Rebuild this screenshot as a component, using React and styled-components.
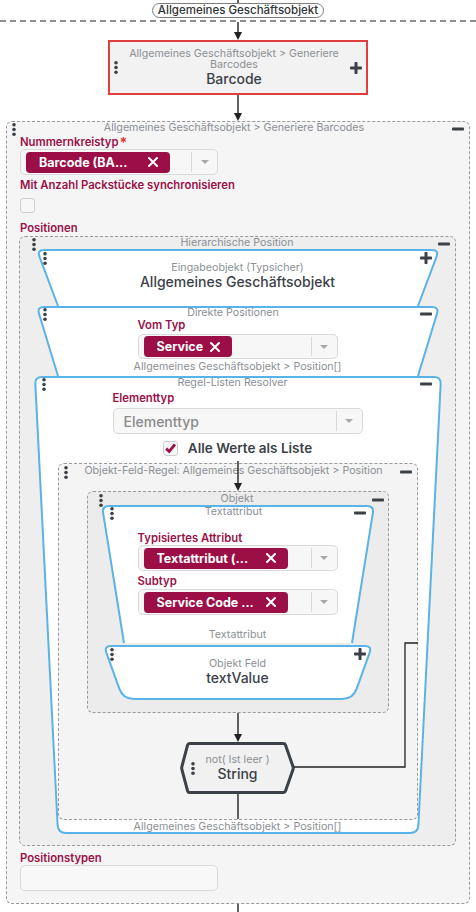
import styled, { createGlobalStyle } from "styled-components";

const GlobalStyle = createGlobalStyle`
  body {
    margin: 0;
    background: #fff;
    font-family: Inter, "Open Sans", sans-serif;
    color: #3b4147;
  }
`;

const INK = "#3b4147";
const CRIMSON = "#9a1149";
const BLUE = "#5ab3e6";

/* ---------- geometry helpers for the node shapes ---------- */
const toward = (p, q, r) => {
  const dx = q[0] - p[0];
  const dy = q[1] - p[1];
  const len = Math.hypot(dx, dy) || 1;
  return [p[0] + (dx / len) * r, p[1] + (dy / len) * r];
};
const fmt = (p) => `${p[0].toFixed(2)},${p[1].toFixed(2)}`;

function polyPath(pts, radii, closed = true) {
  const n = pts.length;
  let d = "";
  for (let i = 0; i < n; i++) {
    const p = pts[i];
    if (!closed && (i === 0 || i === n - 1)) {
      d += i === 0 ? `M${fmt(p)}` : ` L${fmt(p)}`;
      continue;
    }
    const prev = pts[(i - 1 + n) % n];
    const next = pts[(i + 1) % n];
    const a = toward(p, prev, radii[i]);
    const b = toward(p, next, radii[i]);
    d += (d ? ` L${fmt(a)}` : `M${fmt(a)}`) + ` Q${fmt(p)} ${fmt(b)}`;
  }
  return closed ? d + " Z" : d;
}

/* ---------- layout ---------- */
const Page = styled.div`
  width: 476px;
  display: flex;
  flex-direction: column;
  align-items: center;
`;

const EntryPill = styled.div`
  height: 15px;
  box-sizing: border-box;
  padding: 0 5px;
  border: 1px solid #7c7c7c;
  border-radius: 8px;
  font-size: 11.5px;
  font-weight: 500;
  line-height: 13px;
  color: #2f3338;
  white-space: nowrap;
`;

const DashedRule = styled.div`
  align-self: stretch;
  height: 2px;
  margin-top: 2px;
  background-image: linear-gradient(to right, #8e8e8e 60%, transparent 60%);
  background-size: 10px 2px;
`;

const WireSvg = styled.svg`
  display: block;
  flex-shrink: 0;
  overflow: visible;
`;

function Wire({ h, head = true }) {
  return (
    <WireSvg width="10" height={h} viewBox={`0 0 10 ${h}`}>
      <line x1="5" y1="0" x2="5" y2={head ? h - 5 : h} stroke="#222" strokeWidth="1.4" />
      {head && <polygon points={`1,${h - 8} 9,${h - 8} 5,${h}`} fill="#222" />}
    </WireSvg>
  );
}

function Handle() {
  return (
    <WireSvg width="4" height="13" viewBox="0 0 4 13">
      <circle cx="2" cy="1.8" r="1.8" fill={INK} />
      <circle cx="2" cy="6.5" r="1.8" fill={INK} />
      <circle cx="2" cy="11.2" r="1.8" fill={INK} />
    </WireSvg>
  );
}

function PlusIcon() {
  return (
    <WireSvg width="12" height="12" viewBox="0 0 12 12">
      <rect x="0" y="4.5" width="12" height="3" rx="0.8" fill={INK} />
      <rect x="4.5" y="0" width="3" height="12" rx="0.8" fill={INK} />
    </WireSvg>
  );
}

function MinusIcon() {
  return (
    <WireSvg width="12" height="12" viewBox="0 0 12 12">
      <rect x="0" y="4.5" width="12" height="3" rx="0.8" fill={INK} />
    </WireSvg>
  );
}

const ActionCard = styled.div`
  width: 260px;
  height: 55px;
  box-sizing: border-box;
  border: 2px solid #e0403b;
  background: #f2f2f2;
  display: flex;
  align-items: center;
  padding: 0 4px 0 4px;
`;

const CenterText = styled.div`
  flex: 1;
  text-align: center;
  padding: 0 6px;
`;

const Caption = styled.div`
  font-size: 10.7px;
  line-height: ${(p) => p.$lh ?? 11}px;
  color: #8b9095;
  margin-top: ${(p) => p.$mt ?? 0}px;
  text-align: center;
  white-space: ${(p) => (p.$wrap ? "normal" : "nowrap")};
`;

const NodeTitle = styled.div`
  font-size: 14px;
  font-weight: 500;
  line-height: 16px;
  color: ${INK};
  margin-top: ${(p) => p.$mt ?? 0}px;
  white-space: nowrap;
`;

const Group = styled.div`
  position: relative;
  box-sizing: border-box;
  width: ${(p) => (p.$w ? `${p.$w}px` : "auto")};
  align-self: ${(p) => p.$self || "auto"};
  margin-top: ${(p) => p.$mt ?? 0}px;
  margin-left: ${(p) => p.$ml ?? 0}px;
  border: 1px dashed #9a9a9a;
  border-radius: 6px;
  background: ${(p) => p.$bg};
  display: flex;
  flex-direction: column;
  align-items: ${(p) => p.$align || "center"};
  padding-bottom: ${(p) => p.$pb ?? 0}px;
`;

const Head = styled.div`
  align-self: stretch;
  box-sizing: border-box;
  display: flex;
  align-items: flex-start;
  height: ${(p) => p.$h ?? 14}px;
  padding: ${(p) => p.$pt ?? 2}px ${(p) => p.$pr ?? 6}px 0 ${(p) => p.$pl ?? 6}px;
`;

const HeadTitle = styled.div`
  flex: 1;
  text-align: center;
  font-size: 10.7px;
  line-height: 11px;
  margin-top: -1px;
  color: #8b9095;
  white-space: nowrap;
`;

const FormBody = styled.div`
  display: flex;
  flex-direction: column;
  align-items: flex-start;
  padding: 0 13px;
`;

const Field = styled.div`
  width: ${(p) => p.$w}px;
  display: flex;
  flex-direction: column;
  align-items: flex-start;
  margin-top: ${(p) => p.$mt ?? 0}px;
`;

const Label = styled.div`
  font-size: 11.3px;
  font-weight: 600;
  line-height: 12px;
  color: ${CRIMSON};
  margin-top: ${(p) => p.$mt ?? 0}px;
  white-space: nowrap;
`;

const Req = styled.span`
  display: inline-block;
  vertical-align: top;
  height: 12px;
  color: #e53935;
  font-size: 14px;
  font-weight: 700;
  line-height: 13px;
  margin-left: 1px;
`;

const Select = styled.div`
  box-sizing: border-box;
  width: ${(p) => p.$w}px;
  height: ${(p) => p.$h ?? 26}px;
  margin-top: ${(p) => p.$mt ?? 0}px;
  display: flex;
  align-items: center;
  background: #f7f7f7;
  border: 1px solid #dadada;
  border-radius: 5px;
`;

const SelectValue = styled.div`
  flex: 1;
  min-width: 0;
  display: flex;
  align-items: center;
  padding-left: 5px;
`;

const Placeholder = styled.span`
  font-size: 14px;
  font-weight: 500;
  color: #8a8a8a;
  padding-left: 5px;
`;

const Caret = styled.div`
  width: 25px;
  align-self: stretch;
  margin: 2px 0;
  border-left: 1px solid #dadada;
  display: flex;
  align-items: center;
  justify-content: center;

  &::after {
    content: "";
    border-top: 4px solid #a8a8a8;
    border-left: 4px solid transparent;
    border-right: 4px solid transparent;
  }
`;

const Chip = styled.div`
  box-sizing: border-box;
  height: 21px;
  width: ${(p) => (p.$w ? `${p.$w}px` : "auto")};
  display: flex;
  align-items: center;
  gap: 7px;
  padding: 0 12px 0 13px;
  background: #9b0e46;
  border-radius: 4px;
  color: #fff;
  font-size: 12.5px;
  font-weight: 700;
`;

const ChipText = styled.span`
  flex: 1;
  white-space: nowrap;
  overflow: hidden;
`;

function ChipX() {
  return (
    <WireSvg width="10" height="10" viewBox="0 0 10 10">
      <path d="M1 1 L9 9 M9 1 L1 9" stroke="#fff" strokeWidth="2" strokeLinecap="round" />
    </WireSvg>
  );
}

function Tag({ w, children }) {
  return (
    <Chip $w={w}>
      <ChipText>{children}</ChipText>
      <ChipX />
    </Chip>
  );
}

const Box = styled.div`
  box-sizing: border-box;
  width: 15px;
  height: 15px;
  margin-top: ${(p) => p.$mt ?? 0}px;
  border: 1px solid #cfcfcf;
  border-radius: 3px;
  background: #f7f7f7;
  display: flex;
  align-items: center;
  justify-content: center;
`;

const CheckRow = styled.div`
  display: flex;
  align-items: center;
  gap: 10px;
  margin-top: ${(p) => p.$mt ?? 0}px;
  font-size: 13.5px;
  font-weight: 600;
  color: ${INK};
  white-space: nowrap;
`;

const TextInput = styled.div`
  box-sizing: border-box;
  width: 198px;
  height: 26px;
  margin-top: ${(p) => p.$mt ?? 0}px;
  background: #f8f8f8;
  border: 1px solid #dadada;
  border-radius: 5px;
`;

/* ---------- shaped nodes ---------- */
const NodeBox = styled.div`
  position: relative;
  flex-shrink: 0;
  width: ${(p) => p.$w}px;
  height: ${(p) => p.$h}px;
  margin-top: ${(p) => p.$mt ?? 0}px;
`;

const ShapeSvg = styled.svg`
  position: absolute;
  left: 0;
  top: 0;
  overflow: visible;
`;

const NodeInner = styled.div`
  position: relative;
  height: 100%;
  display: flex;
  flex-direction: column;
  align-items: center;
`;

function TrapNode({ w, h, inset = 22, open = false, rb = 7, mt, children }) {
  const s = 1;
  const TL = [s, s];
  const TR = [w - s, s];
  const bottom = open ? h : h - s;
  const BR = [w - s - inset, bottom];
  const BL = [s + inset, bottom];
  const fill = polyPath([TL, TR, BR, BL], [7, 7, open ? 0 : rb, open ? 0 : rb]);
  const stroke = open
    ? polyPath([BL, TL, TR, BR], [0, 7, 7, 0], false)
    : fill;
  return (
    <NodeBox $w={w} $h={h} $mt={mt}>
      <ShapeSvg width={w} height={h} viewBox={`0 0 ${w} ${h}`}>
        <path d={fill} fill="#fff" />
        <path d={stroke} fill="none" stroke={BLUE} strokeWidth="2" />
      </ShapeSvg>
      <NodeInner>{children}</NodeInner>
    </NodeBox>
  );
}

const HexRow = styled.div`
  position: relative;
  height: 100%;
  display: flex;
  align-items: center;
  padding: 0 15px 0 11px;
  box-sizing: border-box;
`;

const HexText = styled.div`
  flex: 1;
  display: flex;
  flex-direction: column;
  align-items: center;
  margin-top: -1px;
`;

function HexNode({ w, h, children }) {
  const pts = [
    [8, 1.5],
    [w - 10, 1.5],
    [w - 1.5, h / 2],
    [w - 10, h - 1.5],
    [8, h - 1.5],
    [1.5, h / 2],
  ];
  const d = polyPath(pts, [1.5, 1.5, 1.5, 1.5, 1.5, 1.5]);
  return (
    <NodeBox $w={w} $h={h}>
      <ShapeSvg width={w} height={h} viewBox={`0 0 ${w} ${h}`}>
        <path d={d} fill="#f1f1f1" stroke={INK} strokeWidth="3" />
      </ShapeSvg>
      <HexRow>{children}</HexRow>
    </NodeBox>
  );
}

const Overlay = styled.div`
  position: absolute;
  top: ${(p) => p.$top}px;
  left: ${(p) => p.$left};
  transform: ${(p) => (p.$center ? "translateX(-50%)" : "none")};
  pointer-events: none;
  z-index: 2;
`;

export default function App() {
  return (
    <>
      <GlobalStyle />
      <Page>
        <Wire h={3} head={false} />
        <EntryPill>Allgemeines Geschäftsobjekt</EntryPill>
        <DashedRule />
        <Wire h={18} />

        <ActionCard>
          <Handle />
          <CenterText>
            <Caption $wrap>Allgemeines Geschäftsobjekt &gt; Generiere Barcodes</Caption>
            <NodeTitle $mt={1}>Barcode</NodeTitle>
          </CenterText>
          <PlusIcon />
        </ActionCard>

        <Wire h={26} />

        <Group $bg="#f5f5f5" $w={464} $align="stretch" $pb={12}>
          <Head $h={13} $pt={1} $pl={5} $pr={5}>
            <Handle />
            <HeadTitle>Allgemeines Geschäftsobjekt &gt; Generiere Barcodes</HeadTitle>
            <MinusIcon />
          </Head>
          <FormBody>
            <Label $mt={1}>
              Nummernkreistyp<Req>*</Req>
            </Label>
            <Select $w={198} $mt={1}>
              <SelectValue>
                <Tag w={144}>Barcode (BA...</Tag>
              </SelectValue>
              <Caret />
            </Select>
            <Label $mt={4}>Mit Anzahl Packstücke synchronisieren</Label>
            <Box $mt={7} />
            <Label $mt={9}>Positionen</Label>

            <Group $bg="#eeeeee" $self="stretch" $mt={2} $ml={-1} $pb={11}>
              <Head $h={12} $pt={1} $pl={12} $pr={5}>
                <Handle />
                <HeadTitle>Hierarchische Position</HeadTitle>
                <MinusIcon />
              </Head>

              <TrapNode w={404} h={57} inset={21} open>
                <Head $h={13} $pt={3} $pl={7} $pr={8}>
                  <Handle />
                  <HeadTitle />
                  <PlusIcon />
                </Head>
                <Caption $lh={12}>Eingabeobjekt (Typsicher)</Caption>
                <NodeTitle>Allgemeines Geschäftsobjekt</NodeTitle>
              </TrapNode>

              <TrapNode w={404} h={70} inset={21} open>
                <Head $pt={2} $pl={7} $pr={8}>
                  <Handle />
                  <HeadTitle>Direkte Positionen</HeadTitle>
                  <MinusIcon />
                </Head>
                <Field $w={200} $mt={-1}>
                  <Label>Vom Typ</Label>
                  <Select $w={200} $h={25} $mt={3}>
                    <SelectValue>
                      <Tag>Service</Tag>
                    </SelectValue>
                    <Caret />
                  </Select>
                </Field>
                <Caption $mt={2}>Allgemeines Geschäftsobjekt &gt; Position[]</Caption>
              </TrapNode>

              <TrapNode w={408} h={458} inset={23} rb={8}>
                <Head $pt={2} $pl={8} $pr={10}>
                  <Handle />
                  <HeadTitle>Regel-Listen Resolver</HeadTitle>
                  <MinusIcon />
                </Head>
                <Field $w={250} $mt={2}>
                  <Label>Elementtyp</Label>
                  <Select $w={250} $mt={4}>
                    <SelectValue>
                      <Placeholder>Elementtyp</Placeholder>
                    </SelectValue>
                    <Caret />
                  </Select>
                </Field>
                <CheckRow $mt={6}>
                  <Box>
                    <WireSvg width="11" height="10" viewBox="0 0 11 10">
                      <path d="M1.2 5.4 L4.2 8.4 L10 1.4" fill="none" stroke={CRIMSON} strokeWidth="2.8" />
                    </WireSvg>
                  </Box>
                  Alle Werte als Liste
                </CheckRow>

                <Group $bg="#f4f4f4" $w={360} $mt={7}>
                  <Overlay $top={-3} $left="50%" $center>
                    <Wire h={30} />
                  </Overlay>
                  <Overlay $top={0} $left="0">
                    <WireSvg width="360" height="357" viewBox="0 0 360 357">
                      <polyline
                        points="235,303 346,303 346,179 359,179"
                        fill="none"
                        stroke="#222"
                        strokeWidth="1.3"
                      />
                    </WireSvg>
                  </Overlay>
                  <Head $pt={2} $pl={5} $pr={5}>
                    <Handle />
                    <HeadTitle>Objekt-Feld-Regel: Allgemeines Geschäftsobjekt &gt; Position</HeadTitle>
                    <MinusIcon />
                  </Head>

                  <Group $bg="#ececec" $w={302} $mt={13} $pb={12}>
                    <Head $h={13} $pt={2} $pl={11} $pr={4}>
                      <Handle />
                      <HeadTitle>Objekt</HeadTitle>
                      <MinusIcon />
                    </Head>

                    <TrapNode w={274} h={138} inset={22} open>
                      <Head $pt={2} $pl={9} $pr={9}>
                        <Handle />
                        <HeadTitle>Textattribut</HeadTitle>
                        <MinusIcon />
                      </Head>
                      <Field $w={200} $mt={13}>
                        <Label>Typisiertes Attribut</Label>
                        <Select $w={200} $mt={1}>
                          <SelectValue>
                            <Tag w={144}>Textattribut (...</Tag>
                          </SelectValue>
                          <Caret />
                        </Select>
                        <Label $mt={4}>Subtyp</Label>
                        <Select $w={200} $mt={2}>
                          <SelectValue>
                            <Tag w={144}>Service Code ...</Tag>
                          </SelectValue>
                          <Caret />
                        </Select>
                      </Field>
                      <Caption $mt={14}>Textattribut</Caption>
                    </TrapNode>

                    <TrapNode w={270} h={55} inset={19} rb={11} mt={2}>
                      <Head $h={13} $pt={3} $pl={7} $pr={7}>
                        <Handle />
                        <HeadTitle />
                        <PlusIcon />
                      </Head>
                      <Caption $lh={12}>Objekt Feld</Caption>
                      <NodeTitle>textValue</NodeTitle>
                    </TrapNode>
                  </Group>

                  <Wire h={29} />
                  <HexNode w={115} h={52}>
                    <Handle />
                    <HexText>
                      <Caption $lh={12}>not( Ist leer )</Caption>
                      <NodeTitle>String</NodeTitle>
                    </HexText>
                  </HexNode>
                  <Wire h={25} head={false} />
                </Group>

                <Caption $mt={1}>Allgemeines Geschäftsobjekt &gt; Position[]</Caption>
              </TrapNode>
            </Group>

            <Label $mt={6}>Positionstypen</Label>
            <TextInput $mt={1} />
          </FormBody>
        </Group>

        <Wire h={8} head={false} />
      </Page>
    </>
  );
}
